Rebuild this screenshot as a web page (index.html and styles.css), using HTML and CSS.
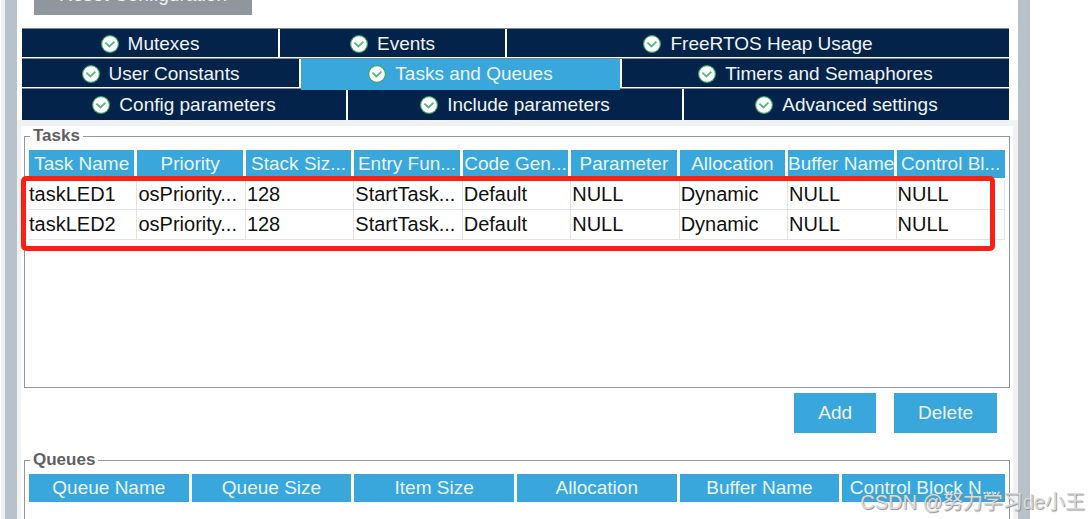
FILE: index.html
```html
<!DOCTYPE html>
<html lang="en">
<head>
<meta charset="utf-8">
<title>FreeRTOS Configuration</title>
<link rel="stylesheet" href="styles.css">
</head>
<body>
<svg class="defs" aria-hidden="true">
  <symbol id="check" viewBox="0 0 18 18">
    <circle cx="9" cy="9" r="9" fill="#3fa66a"/>
    <circle cx="9" cy="9" r="7.8" fill="#fff"/>
    <path d="M4.4 7.6 8.4 11.4 13.4 6.6" fill="none" stroke="#55b87c" stroke-width="1.8"/>
  </symbol>
</svg>
<main class="shell">
  <header class="top">
    <button class="reset" type="button">Reset Configuration</button>
    <nav class="tabs">
      <div class="tab-row">
        <button class="tab mutexes" type="button"><svg><use href="#check"/></svg>Mutexes</button>
        <button class="tab events" type="button"><svg><use href="#check"/></svg>Events</button>
        <button class="tab heap" type="button"><svg><use href="#check"/></svg>FreeRTOS Heap Usage</button>
      </div>
      <div class="tab-row">
        <button class="tab constants" type="button"><svg><use href="#check"/></svg>User Constants</button>
        <button class="tab tasks active" type="button"><svg><use href="#check"/></svg>Tasks and Queues</button>
        <button class="tab timers" type="button"><svg><use href="#check"/></svg>Timers and Semaphores</button>
      </div>
      <div class="tab-row last">
        <button class="tab config" type="button"><svg><use href="#check"/></svg>Config parameters</button>
        <button class="tab include" type="button"><svg><use href="#check"/></svg>Include parameters</button>
        <button class="tab advanced" type="button"><svg><use href="#check"/></svg>Advanced settings</button>
      </div>
    </nav>
  </header>
  <section class="panel">
    <fieldset class="group tasks-group">
      <legend>Tasks</legend>
      <table>
        <thead>
          <tr><th>Task Name</th><th>Priority</th><th>Stack Siz...</th><th>Entry Fun...</th><th>Code Gen...</th><th>Parameter</th><th>Allocation</th><th>Buffer Name</th><th>Control Bl...</th></tr>
        </thead>
        <tbody>
          <tr><td>taskLED1</td><td>osPriority...</td><td>128</td><td>StartTask...</td><td>Default</td><td>NULL</td><td>Dynamic</td><td>NULL</td><td>NULL</td></tr>
          <tr><td>taskLED2</td><td>osPriority...</td><td>128</td><td>StartTask...</td><td>Default</td><td>NULL</td><td>Dynamic</td><td>NULL</td><td>NULL</td></tr>
        </tbody>
      </table>
      <div class="highlight"></div>
    </fieldset>
    <div class="actions">
      <button type="button">Add</button>
      <button type="button">Delete</button>
    </div>
    <fieldset class="group queues-group">
      <legend>Queues</legend>
      <table>
        <thead>
          <tr><th>Queue Name</th><th>Queue Size</th><th>Item Size</th><th>Allocation</th><th>Buffer Name</th><th>Control Block N...</th></tr>
        </thead>
      </table>
    </fieldset>
  </section>
</main>
<div class="watermark">CSDN @努力学习de小王</div>
</body>
</html>
```
FILE: styles.css
```css
* { box-sizing: border-box; }
body {
  margin: 0;
  height: 100vh;
  overflow: hidden;
  position: relative;
  background: #fff;
  font: 19px/24px "Liberation Sans", "Noto Sans CJK SC", Arial, sans-serif;
}
button {
  border: 0;
  padding: 0;
  font: inherit;
  color: #eef3f8;
  cursor: pointer;
}
.defs { position: absolute; width: 0; height: 0; }
.shell {
  height: 100vh;
  overflow: hidden;
  margin: 0 59px 0 5px;
  border: solid #b7c3c9;
  border-width: 0 12px;
  box-shadow: -4px 0 #eff1f3;
  display: flex;
  flex-direction: column;
}
.top { padding: 0 9px 0 5px; }
.reset {
  display: block;
  height: 40px;
  margin: -25px 0 13px 12px;
  padding: 0 24px;
  min-width: 218px;
  background: #8f979c;
}
.tab-row {
  display: flex;
  gap: 2px;
  height: 30px;
  padding-bottom: 1px;
  border-top: 1px solid #7a879b;
  background: #fff;
}
.tab-row.last { height: 32px; padding-bottom: 0; }
.tab {
  flex: 1 1 0;
  min-width: 0;
  display: flex;
  align-items: center;
  justify-content: center;
  gap: 9px;
  padding-top: 2px;
  background: #04234a;
  white-space: nowrap;
}
.last .tab { padding-top: 0; }
.tab svg { width: 18px; height: 18px; flex: none; }
.tab.mutexes { flex-grow: 256; }
.tab.events { flex-grow: 225; }
.tab.heap { flex-grow: 502; }
.tab.constants { flex-grow: 277; }
.tab.tasks { flex-grow: 319; }
.tab.timers { flex-grow: 387; }
.tab.config { flex-grow: 324; }
.tab.include { flex-grow: 334; }
.tab.advanced { flex-grow: 325; }
.tab.active {
  position: relative;
  margin-bottom: -3px;
  padding: 0 0 1px;
  background: #39a7dc;
}
.panel {
  flex: 1;
  min-height: 0;
  border: solid #f0f2f4;
  border-width: 6px 5px 0 4px;
  padding: 0 3px;
}
.group {
  position: relative;
  min-width: 0;
  margin: 0;
  padding: 4px 4px 0;
  border: 1px solid #92999d;
}
.group legend {
  margin-left: 1px;
  padding: 0 3px;
  font-size: 17px;
  line-height: 20px;
  font-weight: bold;
  color: #5f6065;
}
.tasks-group { height: 262px; }
.queues-group { height: 220px; }
table {
  width: 100%;
  table-layout: fixed;
  border-collapse: separate;
  border-spacing: 0;
}
th {
  height: 30px;
  padding: 0;
  font-weight: normal;
  color: #e8f5fd;
  background: #39a7dc;
  border: solid #fff;
  border-width: 0 3px 2px 0;
  white-space: nowrap;
}
th:last-child { border-right: 0; }
td {
  height: 30px;
  padding: 0 0 2px 1px;
  font-size: 20px;
  color: #111;
  border: solid #e2e5e8;
  border-width: 0 1px 1px 0;
  white-space: nowrap;
}
td:first-child { padding-left: 0; }
/* Marker frame drawn over the task rows */
.highlight {
  position: absolute;
  top: 30px;
  left: -4px;
  right: 14px;
  height: 75px;
  border: 5px solid #ff2013;
  border-radius: 5px;
}
.actions {
  display: flex;
  justify-content: flex-end;
  gap: 18px;
  margin: 5px 13px 17px 0;
}
.actions button {
  height: 40px;
  padding: 0 24px;
  background: #39a7dc;
}
.watermark {
  position: absolute;
  right: 4px;
  bottom: 3px;
  font-size: 20px;
  line-height: 28px;
  color: #d8dadc;
  text-shadow: 1px 1px 1px #8b8f93;
}
```
